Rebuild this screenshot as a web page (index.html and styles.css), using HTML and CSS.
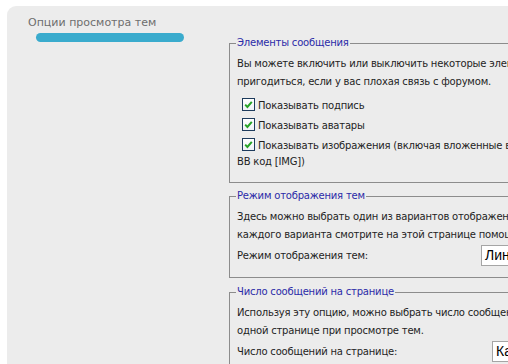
FILE: index.html
```html
<!DOCTYPE html>
<html lang="ru">
<head>
<meta charset="utf-8">
<title>Опции просмотра тем</title>
<link rel="stylesheet" href="styles.css">
</head>
<body>
<div class="panel">
  <aside class="side">
    <div class="side-title">Опции просмотра тем</div>
    <div class="side-bar"></div>
  </aside>
  <main class="content">
    <fieldset class="group group-elements">
      <legend>Элементы сообщения</legend>
      <p class="desc">Вы можете включить или выключить некоторые элементы сообщений. Это может<br>пригодиться, если у вас плохая связь с форумом.</p>
      <label class="check"><span class="box"><svg viewBox="0 0 11 11" width="11" height="11"><path d="M2.2 5.6 L4.4 7.9 L8.8 2.8" fill="none" stroke="#27a327" stroke-width="2"/></svg></span>Показывать подпись</label>
      <label class="check"><span class="box"><svg viewBox="0 0 11 11" width="11" height="11"><path d="M2.2 5.6 L4.4 7.9 L8.8 2.8" fill="none" stroke="#27a327" stroke-width="2"/></svg></span>Показывать аватары</label>
      <label class="check"><span class="box"><svg viewBox="0 0 11 11" width="11" height="11"><path d="M2.2 5.6 L4.4 7.9 L8.8 2.8" fill="none" stroke="#27a327" stroke-width="2"/></svg></span>Показывать изображения (включая вложенные в сообщения и вставленные через<br>BB код [IMG])</label>
    </fieldset>
    <fieldset class="group group-mode">
      <legend>Режим отображения тем</legend>
      <p class="desc">Здесь можно выбрать один из вариантов отображения тем. Описание<br>каждого варианта смотрите на этой странице помощи.</p>
      <div class="row">
        <span class="row-label label-mode">Режим отображения тем:</span>
        <span class="select">Линейный</span>
      </div>
    </fieldset>
    <fieldset class="group">
      <legend>Число сообщений на странице</legend>
      <p class="desc">Используя эту опцию, можно выбрать число сообщений, показываемых на<br>одной странице при просмотре тем.</p>
      <div class="row">
        <span class="row-label label-count">Число сообщений на странице:</span>
        <span class="select">Как в настройках форума</span>
      </div>
    </fieldset>
  </main>
</div>
</body>
</html>
```

FILE: styles.css
```css
html, body {
  margin: 0;
  padding: 0;
  background: #ffffff;
  overflow: hidden;
}

body {
  font-family: "DejaVu Sans", "Liberation Sans", sans-serif;
  font-size: 10px;
  letter-spacing: -0.2px;
  color: #1e1e1e;
}

.panel {
  margin: 6px 0 0 7px;
  background: #ececec;
  border-top-left-radius: 9px;
  display: flex;
  height: 400px;
  overflow: hidden;
}

.side {
  width: 222px;
  flex: none;
  padding-top: 10px;
}

.side-title {
  padding-left: 21px;
  font-size: 11px;
  letter-spacing: 0;
  line-height: 14px;
  color: #6e6e6e;
}

.side-bar {
  margin: 3px 0 0 29px;
  width: 148px;
  height: 9px;
  border-radius: 5px;
  background: #3aabcd;
}

.content {
  padding-top: 30px;
  flex: none;
  width: 460px;
}

.group {
  margin: 0 0 6px 0;
  padding: 5px 7px 11px 7px;
  border: 1px solid #8c8c8c;
  width: 420px;
}

.group-elements {
  padding-bottom: 10px;
}

.group-mode {
  margin-bottom: 7px;
}

.group legend {
  padding: 0 1px;
  margin-left: -1px;
  color: #2b2ba8;
  line-height: 14px;
}

.desc {
  margin: 0;
  line-height: 18px;
  white-space: nowrap;
}

.check {
  display: block;
  padding: 2px 0;
  line-height: 16px;
  white-space: nowrap;
}

.check:first-of-type {
  margin-top: 5px;
}

.box {
  display: inline-block;
  vertical-align: -2px;
  width: 11px;
  height: 11px;
  margin: 0 3px 0 5px;
  border: 1px solid #1d3b5c;
  background: linear-gradient(#ffffff, #eef2f6);
}

.box svg {
  display: block;
}

.row {
  display: flex;
  align-items: center;
  margin-top: 1px;
}

.row-label {
  flex: none;
}

.label-mode {
  width: 244px;
}

.label-count {
  width: 255px;
}

.select {
  flex: none;
  display: block;
  height: 19px;
  line-height: 19px;
  padding: 0 3px;
  border: 1px solid #a5a5a5;
  background: #ffffff;
  font-family: "Liberation Sans", sans-serif;
  font-size: 14px;
  letter-spacing: 0;
  color: #000000;
  white-space: nowrap;
}
```
